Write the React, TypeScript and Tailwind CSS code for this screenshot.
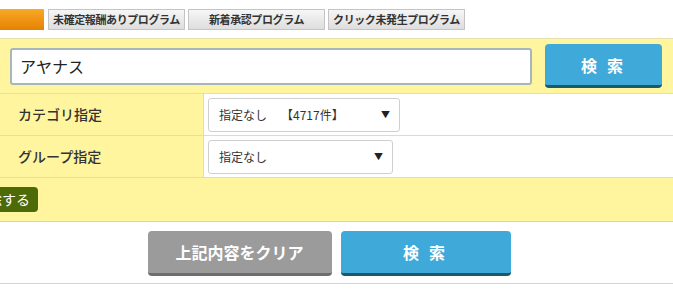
import { ReactNode } from 'react';

const tabs = ['未確定報酬ありプログラム', '新着承認プログラム', 'クリック未発生プログラム'];

function Tab({ children }: { children: ReactNode }) {
    return (
        <div className="flex h-[21px] w-[137px] items-center justify-center whitespace-nowrap border border-[#c4c4c4] bg-gradient-to-b from-[#f6f6f6] to-[#dedede] text-[11px] font-bold tracking-[-0.4px] text-[#333]">
            {children}
        </div>
    );
}

function SelectBox({ width, children }: { width: string; children: ReactNode }) {
    return (
        <div className={`flex h-[34px] items-center justify-between rounded-[3px] border border-[#cfcfcf] bg-white pr-[9px] pl-[10px] text-[12px] text-[#333] ${width}`}>
            <span className="whitespace-nowrap">{children}</span>
            <span className="text-[9px] text-[#222]">▼</span>
        </div>
    );
}

function Row({ label, children }: { label: string; children: ReactNode }) {
    return (
        <div className="flex h-[42px] border-b border-[#dcdcc8]">
            <div className="flex w-[204px] items-center border-r border-[#e0dcc0] bg-[#fff59e] pl-[18px] text-[14px] font-medium text-[#333]">
                {label}
            </div>
            <div className="flex flex-1 items-center pl-[4px]">{children}</div>
        </div>
    );
}

export default function App() {
    return (
        <div className="h-[300px] w-[673px] overflow-hidden bg-white font-['Noto_Sans_CJK_JP',sans-serif]">
            {/* program tabs */}
            <div className="flex items-center pt-[9px]">
                <div className="h-[21px] w-[44px] bg-gradient-to-b from-[#f9a825] to-[#e58200]" />
                <div className="ml-[4px] flex gap-[3px]">
                    {tabs.map((t) => (
                        <Tab key={t}>{t}</Tab>
                    ))}
                </div>
            </div>

            {/* keyword search */}
            <div className="mt-[8px] flex h-[56px] items-center border-y border-[#e6e0b0] bg-[#fff59e] pr-[11px] pl-[10px]">
                <div className="flex h-[37px] w-[522px] items-center rounded-[3px] border-2 border-[#a7b6bd] bg-white pl-[8px] text-[16px] text-[#222]">
                    アヤナス
                </div>
                <button className="ml-[13px] flex h-[44px] w-[117px] items-center justify-center rounded-[4px] border-b-[3px] border-[#1c5a68] bg-[#3fa9da] text-[16px] font-bold tracking-[0.2em] text-white">
                    検 索
                </button>
            </div>

            <Row label="カテゴリ指定">
                <SelectBox width="w-[192px]">
                    指定なし<span className="ml-[14px]">【4717件】</span>
                </SelectBox>
            </Row>
            <Row label="グループ指定">
                <SelectBox width="w-[185px]">指定なし</SelectBox>
            </Row>

            <div className="flex h-[44px] items-center overflow-hidden border-b border-[#d8d4bc] bg-[#fff59e]">
                <span className="-ml-[40px] flex h-[25px] w-[78px] shrink-0 items-center justify-end overflow-hidden whitespace-nowrap rounded-[4px] bg-[#4d6a08] pr-[8px] text-[14px] text-white">
                    条件を削除する
                </span>
            </div>

            {/* actions */}
            <div className="flex h-[62px] items-center justify-center gap-[9px] border-b border-[#d4d4d4] pr-[15px] pt-[2px]">
                <button className="flex h-[45px] w-[184px] items-center justify-center rounded-[4px] border-b-[3px] border-[#6d6d6d] bg-[#9b9b9b] text-[16px] font-bold text-white">
                    上記内容をクリア
                </button>
                <button className="flex h-[45px] w-[170px] items-center justify-center rounded-[4px] border-b-[3px] border-[#1c5a68] bg-[#3fa9da] text-[16px] font-bold tracking-[0.2em] text-white">
                    検 索
                </button>
            </div>
        </div>
    );
}
